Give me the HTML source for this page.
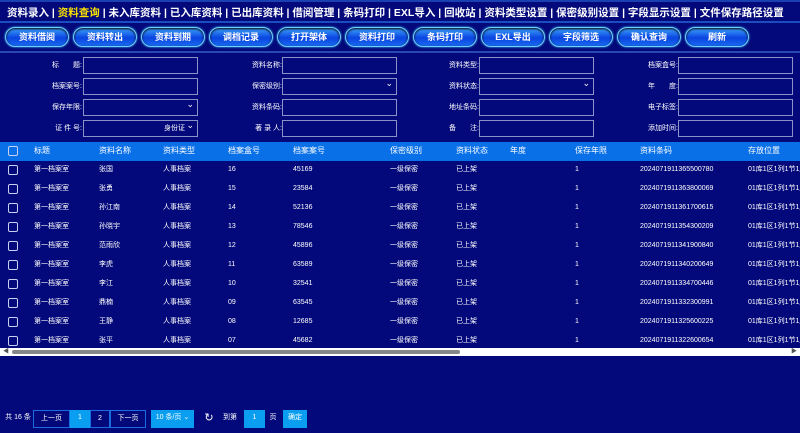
<!DOCTYPE html>
<html><head><meta charset="utf-8"><style>
*{margin:0;padding:0;box-sizing:border-box}
body{width:800px;height:433px;overflow:hidden;background:#03097a;font-family:"Liberation Sans","Noto Sans CJK SC",sans-serif;color:#fff;position:relative}
.nav{position:absolute;top:0;left:0;width:800px;height:23px;border-top:2px solid #1a3fb0;border-bottom:2px solid #1a4ec0;font-size:10.5px;font-weight:bold;padding-left:7px;line-height:22px;white-space:nowrap;overflow:hidden}
.nav .a{color:#ffe300}
.btn{position:absolute;top:27px;width:64px;height:20px;border-radius:10px;background:linear-gradient(#3da4ff,#0a44e0 55%,#1a6af0);border:1px solid #6fd0ff;box-shadow:0 1px 2px #000 inset,0 0 2px #44c8ff;font-size:9px;font-weight:bold;text-align:center;line-height:18px}
.sep{position:absolute;top:51px;left:0;width:800px;height:2px;background:#2a48b0}
.lbl{position:absolute;font-size:7px;text-align:right;width:60px;line-height:16px}
.inp{position:absolute;width:115px;height:17px;border:1px solid #8a92c8;font-size:7px;text-align:right;padding-right:12px;line-height:15px}
.dd::after{content:"⌄";position:absolute;right:3px;top:-3px;font-size:9px}
.th{position:absolute;top:142px;left:0;width:800px;height:19px;background:#0a70e8}
.c{position:absolute;font-size:7px;white-space:nowrap;line-height:10px;height:10px}
.h{font-size:8px}
.cb{position:absolute;left:8px;width:10px;height:10px;border:1px solid #c8d0f0;border-radius:2px}
.sb{position:absolute;top:348px;left:0;width:800px;height:8px;background:#fff}
.pg{position:absolute;top:410px;height:18px;font-size:7px;line-height:16px;text-align:center}
</style></head><body>
<div class="nav">资料录入 | <span class="a">资料查询</span> | 未入库资料 | 已入库资料 | 已出库资料 | 借阅管理 | 条码打印 | EXL导入 | 回收站 | 资料类型设置 | 保密级别设置 | 字段显示设置 | 文件保存路径设置</div>
<div class="btn" style="left:5px">资料借阅</div>
<div class="btn" style="left:73px">资料转出</div>
<div class="btn" style="left:141px">资料到期</div>
<div class="btn" style="left:209px">调档记录</div>
<div class="btn" style="left:277px">打开架体</div>
<div class="btn" style="left:345px">资料打印</div>
<div class="btn" style="left:413px">条码打印</div>
<div class="btn" style="left:481px">EXL导出</div>
<div class="btn" style="left:549px">字段筛选</div>
<div class="btn" style="left:617px">确认查询</div>
<div class="btn" style="left:685px">刷新</div>
<div class="sep"></div>

<div class="lbl" style="left:22px;top:58px">标　　题:</div><div class="inp" style="left:83px;top:57px"></div>
<div class="lbl" style="left:22px;top:79px">档案案号:</div><div class="inp" style="left:83px;top:78px"></div>
<div class="lbl" style="left:22px;top:100px">保存年限:</div><div class="inp dd" style="left:83px;top:99px"></div>
<div class="lbl" style="left:22px;top:121px">证 件 号:</div><div class="inp dd" style="left:83px;top:120px">身份证</div>

<div class="lbl" style="left:222px;top:58px">资料名称:</div><div class="inp" style="left:282px;top:57px"></div>
<div class="lbl" style="left:222px;top:79px">保密级别:</div><div class="inp dd" style="left:282px;top:78px"></div>
<div class="lbl" style="left:222px;top:100px">资料条码:</div><div class="inp" style="left:282px;top:99px"></div>
<div class="lbl" style="left:222px;top:121px">著 录 人:</div><div class="inp" style="left:282px;top:120px"></div>

<div class="lbl" style="left:419px;top:58px">资料类型:</div><div class="inp" style="left:479px;top:57px"></div>
<div class="lbl" style="left:419px;top:79px">资料状态:</div><div class="inp dd" style="left:479px;top:78px"></div>
<div class="lbl" style="left:419px;top:100px">地址条码:</div><div class="inp" style="left:479px;top:99px"></div>
<div class="lbl" style="left:419px;top:121px">备　　注:</div><div class="inp" style="left:479px;top:120px"></div>

<div class="lbl" style="left:618px;top:58px">档案盒号:</div><div class="inp" style="left:678px;top:57px"></div>
<div class="lbl" style="left:618px;top:79px">年　　度:</div><div class="inp" style="left:678px;top:78px"></div>
<div class="lbl" style="left:618px;top:100px">电子标签:</div><div class="inp" style="left:678px;top:99px"></div>
<div class="lbl" style="left:618px;top:121px">添加时间:</div><div class="inp" style="left:678px;top:120px"></div>

<div class="th"></div>
<div class="cb" style="top:146px"></div>
<div class="c h" style="left:34px;top:146px">标题</div>
<div class="c h" style="left:99px;top:146px">资料名称</div>
<div class="c h" style="left:163px;top:146px">资料类型</div>
<div class="c h" style="left:228px;top:146px">档案盒号</div>
<div class="c h" style="left:293px;top:146px">档案案号</div>
<div class="c h" style="left:390px;top:146px">保密级别</div>
<div class="c h" style="left:456px;top:146px">资料状态</div>
<div class="c h" style="left:510px;top:146px">年度</div>
<div class="c h" style="left:575px;top:146px">保存年限</div>
<div class="c h" style="left:640px;top:146px">资料条码</div>
<div class="c h" style="left:748px;top:146px">存放位置</div>

<div id="rows"></div>
<script>
var d=[["张国","16","45169","2024071911365500780"],["张勇","15","23584","2024071911363800069"],["孙江南","14","52136","2024071911361700615"],["孙晓宇","13","78546","2024071911354300209"],["范雨欣","12","45896","2024071911341900840"],["李虎","11","63589","2024071911340200649"],["李江","10","32541","2024071911334700446"],["鼎楠","09","63545","2024071911332300991"],["王静","08","12685","2024071911325600225"],["张平","07","45682","2024071911322600654"]];
var h="";
d.forEach(function(r,i){var t=Math.round(164.5+i*19.1);
h+='<div class="cb" style="top:'+t+'px"></div>'+
'<div class="c" style="left:34px;top:'+t+'px">第一档案室</div>'+
'<div class="c" style="left:99px;top:'+t+'px">'+r[0]+'</div>'+
'<div class="c" style="left:163px;top:'+t+'px">人事档案</div>'+
'<div class="c" style="left:228px;top:'+t+'px">'+r[1]+'</div>'+
'<div class="c" style="left:293px;top:'+t+'px">'+r[2]+'</div>'+
'<div class="c" style="left:390px;top:'+t+'px">一级保密</div>'+
'<div class="c" style="left:456px;top:'+t+'px">已上架</div>'+
'<div class="c" style="left:575px;top:'+t+'px">1</div>'+
'<div class="c" style="left:640px;top:'+t+'px">'+r[3]+'</div>'+
'<div class="c" style="left:748px;top:'+t+'px">01库1区1列1节1层</div>';});
document.getElementById("rows").innerHTML=h;
</script>
<div class="sb"><div style="position:absolute;left:12px;top:2px;width:448px;height:4px;background:#888;border-radius:2px"></div><div style="position:absolute;left:3px;top:1px;font-size:6px;color:#555;line-height:6px">◀</div><div style="position:absolute;right:3px;top:1px;font-size:6px;color:#555;line-height:6px">▶</div></div>

<div class="pg" style="left:4px;width:28px">共 16 条</div>
<div class="pg" style="left:33px;width:37px;border:1px solid #1a6ae0">上一页</div>
<div class="pg" style="left:70px;width:20px;background:#0a9ef0">1</div>
<div class="pg" style="left:90px;width:20px;border:1px solid #1a6ae0">2</div>
<div class="pg" style="left:110px;width:36px;border:1px solid #1a6ae0">下一页</div>
<div class="pg" style="left:151px;width:43px;background:#0a9ef0">10 条/页 ⌄</div>
<div class="pg" style="left:203px;width:12px;font-size:11px;line-height:16px">↻</div>
<div class="pg" style="left:222px;width:16px">到第</div>
<div class="pg" style="left:244px;width:21px;background:#0a9ef0">1</div>
<div class="pg" style="left:268px;width:10px">页</div>
<div class="pg" style="left:283px;width:24px;background:#0a9ef0">确定</div>
</body></html>
